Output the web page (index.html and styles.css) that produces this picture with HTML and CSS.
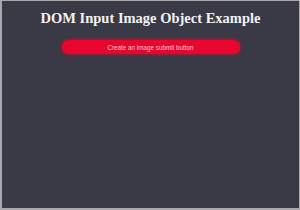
FILE: index.html
```html
<!DOCTYPE html>
<html>
<head>
<meta charset="utf-8">
<link rel="stylesheet" href="styles.css">
</head>
<body>
<div class="frame">
  <h1 class="title">DOM Input Image Object Example</h1>
  <button class="btn">Create an image submit button</button>
</div>
</body>
</html>
```
FILE: styles.css
```css
html, body {
  margin: 0;
  padding: 0;
  background: #a9a9ad;
}
.frame {
  box-sizing: border-box;
  width: 297px;
  height: 207px;
  margin: 1px 0 0 2px;
  background: #3a3946;
  display: flex;
  flex-direction: column;
  align-items: center;
}
.title {
  margin: 9px 0 0;
  font-family: "Liberation Serif", serif;
  font-weight: bold;
  font-size: 14.5px;
  line-height: 16px;
  color: #f2f2f4;
}
.btn {
  margin-top: 14px;
  width: 178px;
  height: 14px;
  border: none;
  border-radius: 7px;
  background: #e8062e;
  box-shadow: 0 0 3px 1px rgba(232, 6, 46, 0.6);
  color: #f4c9d1;
  font-family: "Liberation Sans", Arial, sans-serif;
  font-size: 6.3px;
  padding: 0;
}
```
